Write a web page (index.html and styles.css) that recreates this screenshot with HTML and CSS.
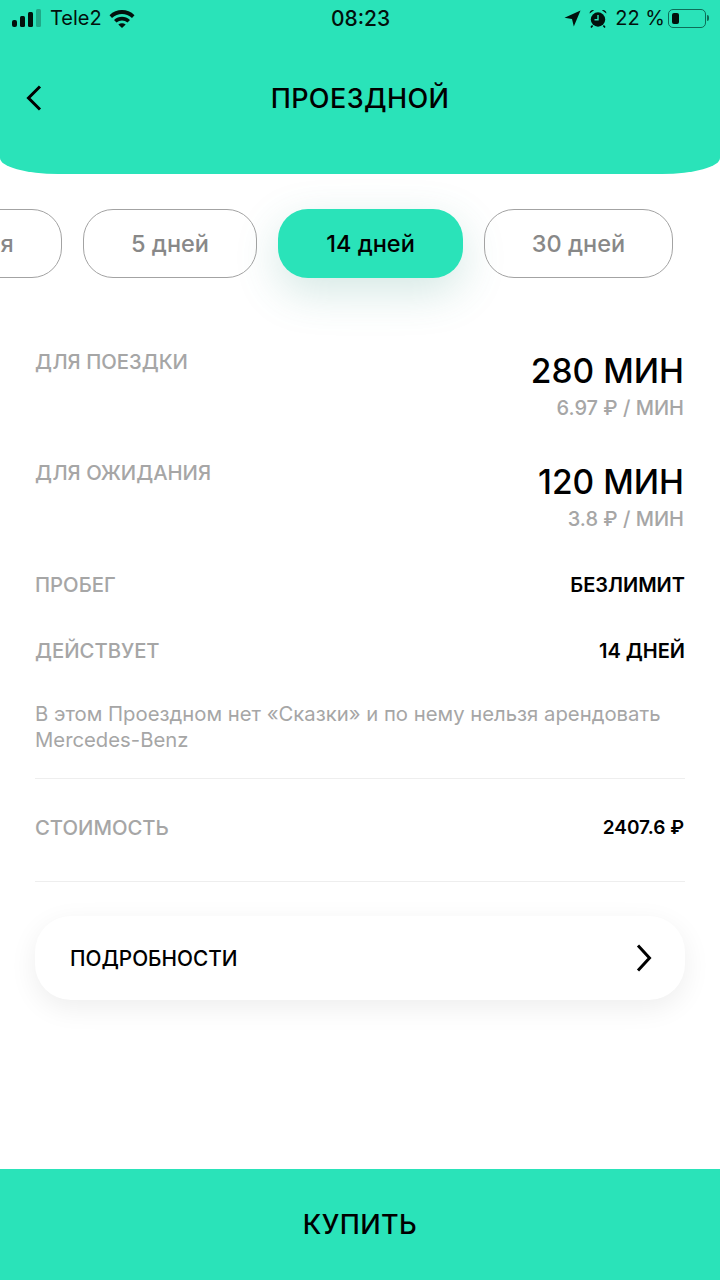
FILE: index.html
```html
<!DOCTYPE html>
<html>
<head>
<title>Проездной</title>
<meta charset="utf-8">
<link rel="stylesheet" href="styles.css">
</head>
<body>

<div class="page">
  <div class="header">
    <div class="status-bar">
      <div class="status-left">
        <svg class="signal" width="29" height="18" viewBox="0 0 29 18">
          <rect x="0" y="11" width="5" height="7" rx="2" fill="#02110c"/>
          <rect x="8" y="7" width="5" height="11" rx="1.5" fill="#02110c"/>
          <rect x="16" y="3" width="5" height="15" rx="1.5" fill="#02110c"/>
          <rect x="24" y="0" width="5" height="18" rx="1.5" fill="#02110c" opacity="0.28"/>
        </svg>
        <span class="carrier">Tele2</span>
        <svg class="wifi" width="26" height="19" viewBox="0 0 26 19">
          <path d="M.5 6.200C7.500-.6 18.500-.6 25.500 6.200L23 8.900C17.200 3.600 8.800 3.600 3 8.900z" fill="#02110c"/>
          <path d="M5 11C9.800 6.700 16.200 6.700 21 11l-2.500 2.600c-3.300-2.700-7.700-2.700-11 0z" fill="#02110c"/>
          <path d="M9.300 15.400c2.200-1.700 5.200-1.700 7.400 0L13 19z" fill="#02110c"/>
        </svg>
      </div>
      <div class="status-time">08:23</div>
      <div class="status-right">
        <svg width="17" height="17" viewBox="0 0 17 17">
          <path d="M16.500 .5L9.800 16.500 8 9 .5 7.800z" fill="#02110c"/>
        </svg>
        <svg class="alarm" width="18" height="19" viewBox="0 0 18 19">
          <circle cx="9" cy="10.500" r="7.200" fill="#02110c"/>
          <path d="M9 6v4.800H5.500" fill="none" stroke="#2ae3b9" stroke-width="1.400"/>
          <path d="M.6 4.600C.6 2 2.800 .6 5 1.200zM17.400 4.600C17.400 2 15.200 .6 13 1.200z" fill="#02110c"/>
          <path d="M3.600 16.400l-1.600 2M14.400 16.400l1.600 2" stroke="#02110c" stroke-width="1.600"/>
        </svg>
        <span class="battery-text">22 %</span>
        <div class="battery"><div class="battery-level"></div></div>
        <div class="battery-cap"></div>
      </div>
    </div>
    <div class="title-bar">
      <svg class="back" width="16" height="26" viewBox="0 0 16 26">
        <path d="M14 1.500L2.500 13 14 24.500" fill="none" stroke="#000" stroke-width="3"/>
      </svg>
      <h1 class="title">ПРОЕЗДНОЙ</h1>
    </div>
  </div>

  <div class="chips">
    <div class="chip chip-first">3 дня</div>
    <div class="chip chip-five">5 дней</div>
    <div class="chip chip-active">14 дней</div>
    <div class="chip chip-thirty">30 дней</div>
  </div>

  <div class="content">
    <div class="row row-big">
      <div class="label">ДЛЯ ПОЕЗДКИ</div>
      <div class="value-box">
        <div class="value-big">280 МИН</div>
        <div class="value-sub">6.97 ₽ / МИН</div>
      </div>
    </div>
    <div class="row row-big">
      <div class="label">ДЛЯ ОЖИДАНИЯ</div>
      <div class="value-box">
        <div class="value-big">120 МИН</div>
        <div class="value-sub">3.8 ₽ / МИН</div>
      </div>
    </div>
    <div class="row row-small">
      <div class="label">ПРОБЕГ</div>
      <div class="value">БЕЗЛИМИТ</div>
    </div>
    <div class="row row-small">
      <div class="label">ДЕЙСТВУЕТ</div>
      <div class="value">14 ДНЕЙ</div>
    </div>
    <p class="note">В этом Проездном нет «Сказки» и по нему нельзя арендовать Mercedes-Benz</p>
    <div class="row row-price">
      <div class="label">СТОИМОСТЬ</div>
      <div class="value value-price">2407.6 ₽</div>
    </div>
    <div class="details">
      <span>ПОДРОБНОСТИ</span>
      <svg width="16" height="28" viewBox="0 0 16 28">
        <path d="M2 1.500L13.500 14 2 26.500" fill="none" stroke="#000" stroke-width="3"/>
      </svg>
    </div>
  </div>

  <div class="buy">КУПИТЬ</div>
</div>

</body>
</html>
```

FILE: styles.css
```css
body, html {
  margin: 0;
  height: 100%;
  overflow: hidden;
}

body {
  font-family: "Inter", "Noto Sans", sans-serif;
  background-color: #fff;
  color: #000;
}

.page {
  height: 1280px;
  display: flex;
  flex-direction: column;
  overflow: hidden;
}

.header {
  height: 174px;
  flex-shrink: 0;
  background-color: #2ae3b9;
  border-radius: 0 0 58px 58px / 0 0 16px 16px;
}

.status-bar {
  height: 36px;
  display: grid;
  grid-template-columns: 1fr auto 1fr;
  align-items: center;
  padding: 0 11px 0 12px;
  color: #02110c;
}

.status-left, .status-right {
  display: flex;
  align-items: center;
}

.status-right {
  justify-content: flex-end;
}

.carrier {
  font-size: 20px;
  margin-left: 9px;
  margin-right: 7px;
}

.status-time {
  font-size: 21px;
  font-weight: 500;
}

.alarm {
  margin-left: 8px;
}

.battery-text {
  font-size: 20px;
  margin-left: 8px;
  margin-right: 3px;
}

.battery {
  width: 38px;
  height: 19px;
  border: 1px solid #0d6e58;
  border-radius: 5px;
  padding: 3px;
  box-sizing: border-box;
  display: flex;
}

.battery-level {
  width: 7px;
  background-color: #02110c;
  border-radius: 2px;
}

.battery-cap {
  width: 2px;
  height: 6px;
  margin-left: 1px;
  background-color: #0d6e58;
  border-radius: 0 2px 2px 0;
}

.title-bar {
  height: 124px;
  position: relative;
  display: flex;
  align-items: center;
  justify-content: center;
}

.back {
  position: absolute;
  left: 26px;
  top: 49px;
}

.title {
  margin: 0;
  font-size: 27px;
  font-weight: 500;
  letter-spacing: 0.4px;
}

.chips {
  display: flex;
  gap: 21px;
  margin-top: 35px;
  margin-left: -98px;
}

.chip {
  height: 69px;
  box-sizing: border-box;
  flex-shrink: 0;
  display: flex;
  align-items: center;
  justify-content: center;
  border: 1px solid #a3a3a3;
  border-radius: 30px;
  font-size: 23.500px;
  font-weight: 500;
  color: #888;
}

.chip-first {
  width: 160px;
}

.chip-five {
  width: 174px;
}

.chip-active {
  width: 185px;
  border: none;
  background-color: #2ae3b9;
  color: #000;
  box-shadow: 0 14px 44px rgba(60, 150, 130, 0.22);
}

.chip-thirty {
  width: 189px;
}

.content {
  flex: 1;
  padding: 72px 35px 0;
}

.row {
  display: flex;
  justify-content: space-between;
  align-items: flex-start;
}

.row-big {
  height: 111px;
}

.row-big + .row-big {
  height: 112px;
}

.row-small {
  height: 66px;
}

.label {
  font-size: 20.300px;
  font-weight: 500;
  color: #a6a6a6;
  line-height: 24px;
}

.value-box {
  text-align: right;
  margin-top: -1px;
  margin-right: 1px;
}

.value-big {
  font-size: 33.500px;
  font-weight: 500;
  line-height: 45px;
}

.value-sub {
  font-size: 20px;
  font-weight: 500;
  color: #a6a6a6;
  line-height: 28px;
}

.value {
  font-size: 20px;
  font-weight: 600;
  line-height: 24px;
}

.value-price {
  font-size: 19px;
  margin-right: 1px;
}

.note {
  margin: -4px 0 0;
  padding-bottom: 25px;
  border-bottom: 1px solid #eee;
  font-size: 20.300px;
  line-height: 26px;
  color: #a6a6a6;
}

.row-price {
  height: 103px;
  box-sizing: border-box;
  padding-top: 37px;
  border-bottom: 1px solid #eee;
}

.details {
  height: 84px;
  margin-top: 34px;
  padding: 0 33px 0 35px;
  display: flex;
  align-items: center;
  justify-content: space-between;
  border-radius: 36px;
  background-color: #fff;
  box-shadow: 0 8px 28px rgba(0, 0, 0, 0.07);
  font-size: 20.800px;
  font-weight: 500;
}

.buy {
  height: 111px;
  flex-shrink: 0;
  display: flex;
  align-items: center;
  justify-content: center;
  background-color: #2ae3b9;
  font-size: 27px;
  font-weight: 500;
  letter-spacing: 0.4px;
}
```
